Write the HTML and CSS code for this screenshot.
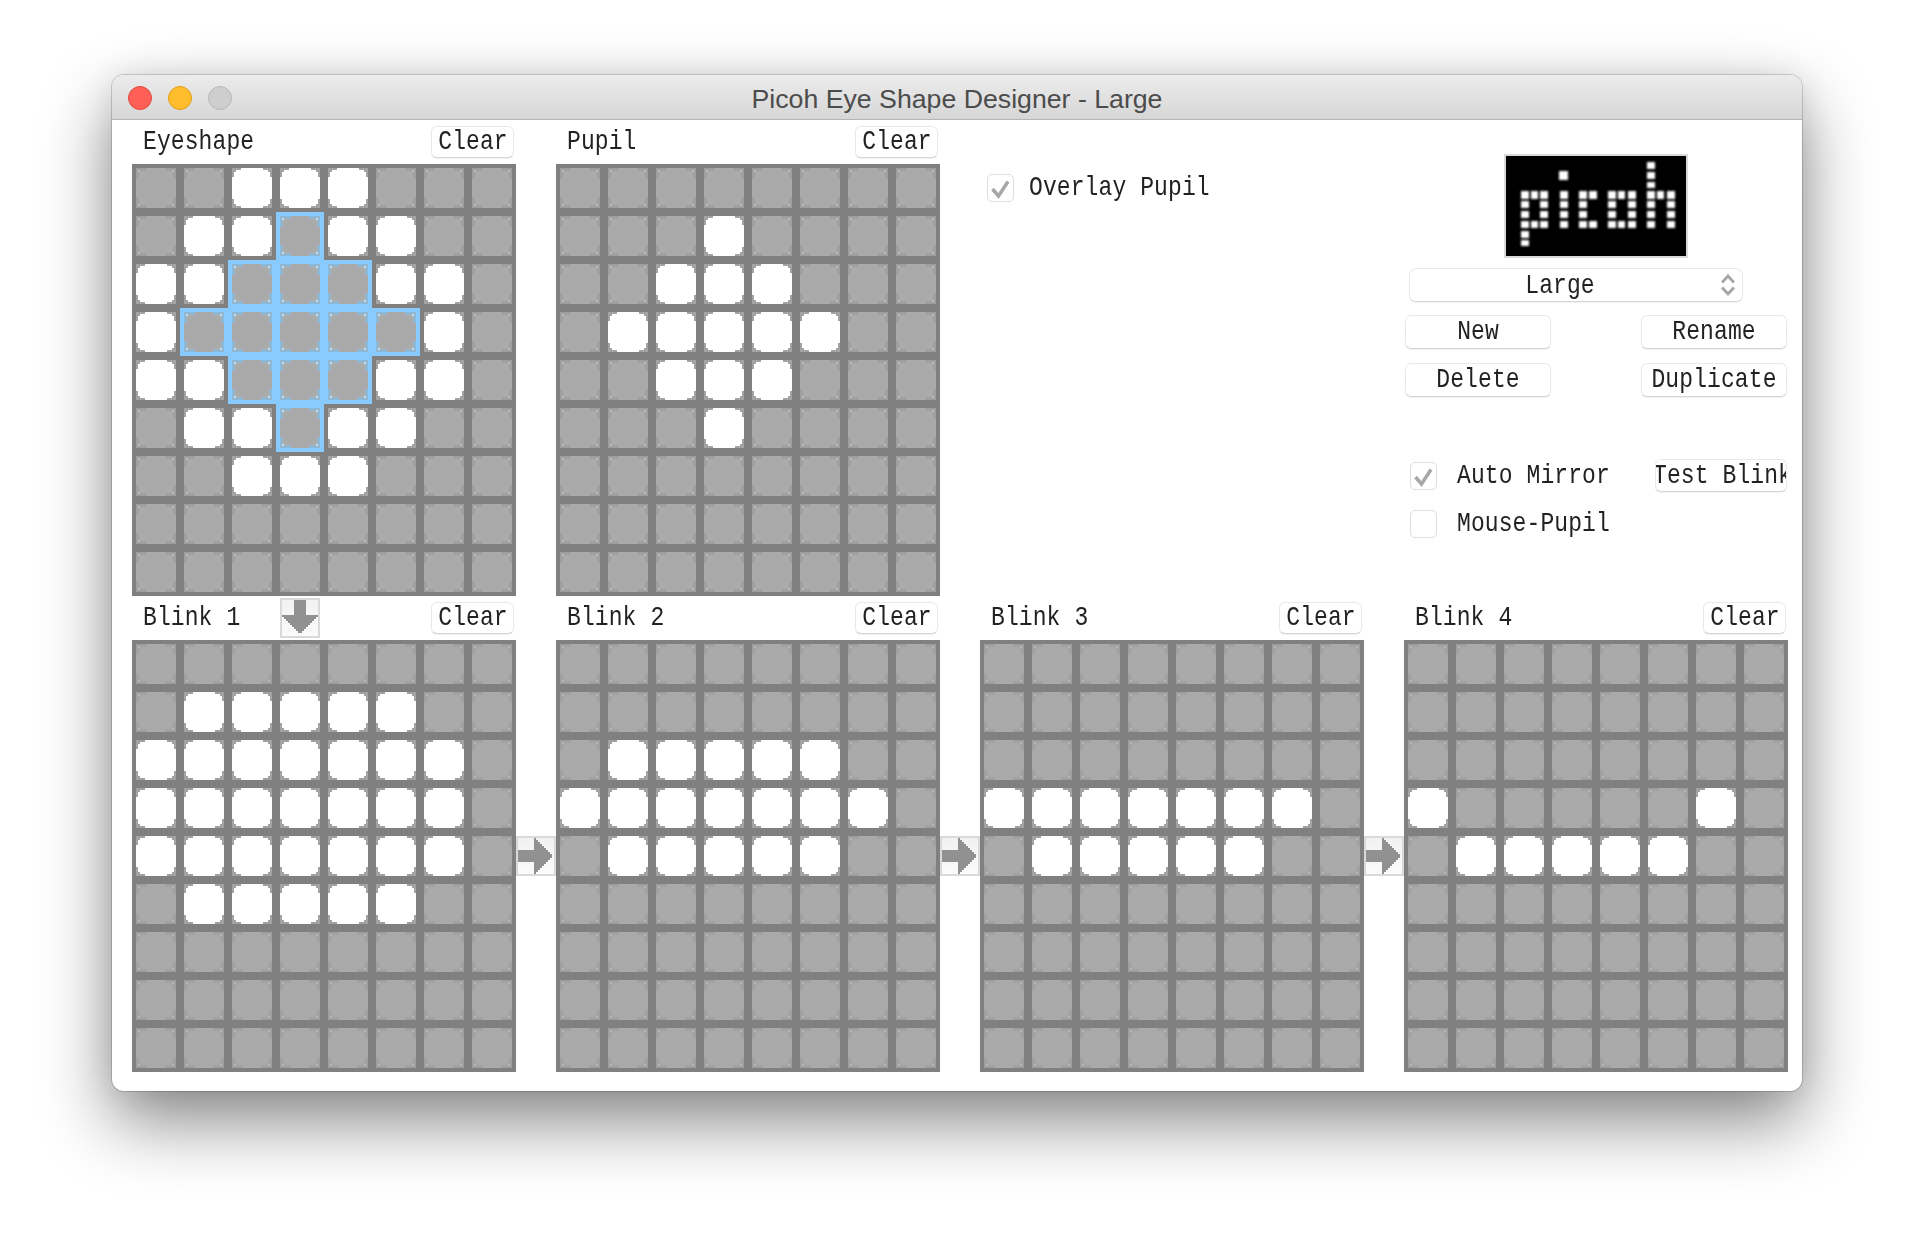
FILE: index.html
```html
<!DOCTYPE html>
<html lang="en">
<head>
<meta charset="utf-8">
<title>Picoh Eye Shape Designer - Large</title>
<link rel="stylesheet" href="styles.css">
</head>
<body>
<div class="window">
  <header class="titlebar">
    <div class="lights"><span class="light red"></span><span class="light yellow"></span><span class="light off"></span></div>
    <div class="title">Picoh Eye Shape Designer - Large</div>
  </header>
  <main class="content">

    <section class="panel">
      <div class="head"><span class="label">Eyeshape</span><button class="btn clear"><span class="t">Clear</span></button></div>
      <div class="grid">
        <i></i><i></i><i class="w"></i><i class="w"></i><i class="w"></i><i></i><i></i><i></i>
        <i></i><i class="w"></i><i class="w"></i><i class="h"></i><i class="w"></i><i class="w"></i><i></i><i></i>
        <i class="w"></i><i class="w"></i><i class="h"></i><i class="h"></i><i class="h"></i><i class="w"></i><i class="w"></i><i></i>
        <i class="w"></i><i class="h"></i><i class="h"></i><i class="h"></i><i class="h"></i><i class="h"></i><i class="w"></i><i></i>
        <i class="w"></i><i class="w"></i><i class="h"></i><i class="h"></i><i class="h"></i><i class="w"></i><i class="w"></i><i></i>
        <i></i><i class="w"></i><i class="w"></i><i class="h"></i><i class="w"></i><i class="w"></i><i></i><i></i>
        <i></i><i></i><i class="w"></i><i class="w"></i><i class="w"></i><i></i><i></i><i></i>
        <i></i><i></i><i></i><i></i><i></i><i></i><i></i><i></i>
        <i></i><i></i><i></i><i></i><i></i><i></i><i></i><i></i>
      </div>
    </section>

    <section class="panel">
      <div class="head"><span class="label">Pupil</span><button class="btn clear"><span class="t">Clear</span></button></div>
      <div class="grid">
        <i></i><i></i><i></i><i></i><i></i><i></i><i></i><i></i>
        <i></i><i></i><i></i><i class="w"></i><i></i><i></i><i></i><i></i>
        <i></i><i></i><i class="w"></i><i class="w"></i><i class="w"></i><i></i><i></i><i></i>
        <i></i><i class="w"></i><i class="w"></i><i class="w"></i><i class="w"></i><i class="w"></i><i></i><i></i>
        <i></i><i></i><i class="w"></i><i class="w"></i><i class="w"></i><i></i><i></i><i></i>
        <i></i><i></i><i></i><i class="w"></i><i></i><i></i><i></i><i></i>
        <i></i><i></i><i></i><i></i><i></i><i></i><i></i><i></i>
        <i></i><i></i><i></i><i></i><i></i><i></i><i></i><i></i>
        <i></i><i></i><i></i><i></i><i></i><i></i><i></i><i></i>
      </div>
    </section>

    <section class="overlay-col">
      <label class="check-row">
        <span class="check"><svg viewBox="0 0 25 26" class="tick"><path d="M4.500 14l6 7L20 6.500"/></svg></span>
        <span class="label">Overlay Pupil</span>
      </label>
    </section>

    <section class="controls">
      <div class="logo">
        <svg class="logo-art" viewBox="0 0 180 100" width="180" height="100">
          <g fill="#fff">
            <rect x="141" y="6" width="8" height="7"/>
            <rect x="53" y="15" width="9" height="9"/><rect x="141" y="16" width="8" height="7"/>
            <rect x="141" y="26" width="8" height="6"/>
            <rect x="15" y="35" width="8" height="8"/><rect x="25" y="35" width="7" height="8"/><rect x="34" y="35" width="8" height="8"/><rect x="54" y="35" width="8" height="8"/><rect x="73" y="35" width="8" height="8"/><rect x="83" y="35" width="8" height="8"/><rect x="102" y="35" width="8" height="8"/><rect x="112" y="35" width="7" height="8"/><rect x="122" y="35" width="8" height="8"/><rect x="141" y="35" width="8" height="8"/><rect x="151" y="35" width="7" height="8"/><rect x="161" y="35" width="8" height="8"/>
            <rect x="15" y="45" width="8" height="7"/><rect x="34" y="45" width="8" height="7"/><rect x="54" y="45" width="8" height="7"/><rect x="73" y="45" width="8" height="7"/><rect x="102" y="45" width="8" height="7"/><rect x="122" y="45" width="8" height="7"/><rect x="141" y="45" width="8" height="7"/><rect x="161" y="45" width="8" height="7"/>
            <rect x="15" y="55" width="8" height="7"/><rect x="34" y="55" width="8" height="7"/><rect x="54" y="55" width="8" height="7"/><rect x="73" y="55" width="8" height="7"/><rect x="102" y="55" width="8" height="7"/><rect x="122" y="55" width="8" height="7"/><rect x="141" y="55" width="8" height="7"/><rect x="161" y="55" width="8" height="7"/>
            <rect x="15" y="65" width="8" height="7"/><rect x="25" y="65" width="7" height="7"/><rect x="34" y="65" width="8" height="7"/><rect x="54" y="65" width="8" height="7"/><rect x="73" y="65" width="8" height="7"/><rect x="83" y="65" width="8" height="7"/><rect x="102" y="65" width="8" height="7"/><rect x="112" y="65" width="7" height="7"/><rect x="122" y="65" width="8" height="7"/><rect x="141" y="65" width="8" height="7"/><rect x="161" y="65" width="8" height="7"/>
            <rect x="15" y="75" width="8" height="7"/>
            <rect x="15" y="84" width="8" height="6"/>
          </g>
        </svg>
      </div>
      <div class="select">
        <span class="t">Large</span>
        <svg class="chevrons" viewBox="0 0 14 24" width="14" height="24"><path d="M1 9.500l6-6.500 6 6.500M1 14.500l6 6.500 6-6.500"/></svg>
      </div>
      <div class="btn-row first"><button class="btn wide"><span class="t">New</span></button><button class="btn wide"><span class="t">Rename</span></button></div>
      <div class="btn-row"><button class="btn wide"><span class="t">Delete</span></button><button class="btn wide"><span class="t">Duplicate</span></button></div>
      <div class="option-row">
        <label class="check-row spaced">
          <span class="check"><svg viewBox="0 0 25 26" class="tick"><path d="M4.500 14l6 7L20 6.500"/></svg></span>
          <span class="label">Auto Mirror</span>
        </label>
        <button class="btn test"><span class="t">Test Blink</span></button>
      </div>
      <label class="check-row spaced mouse">
        <span class="check"></span>
        <span class="label">Mouse-Pupil</span>
      </label>
    </section>

    <section class="panel">
      <div class="head">
        <span class="label">Blink 1</span><button class="btn clear"><span class="t">Clear</span></button>
        <span class="arrow-btn arrow-down"><svg viewBox="0 0 36 36" width="36" height="36" shape-rendering="crispEdges"><path d="M12 0h12v15h12v2h-2v2h-2v2h-2v2h-2v2h-2v2h-2v2h-2v2h-2v2h-4v-2h-2v-2h-2v-2h-2v-2h-2v-2h-2v-2h-2v-2h-2v-2H0v-2h12z"/></svg></span>
      </div>
      <div class="grid">
        <i></i><i></i><i></i><i></i><i></i><i></i><i></i><i></i>
        <i></i><i class="w"></i><i class="w"></i><i class="w"></i><i class="w"></i><i class="w"></i><i></i><i></i>
        <i class="w"></i><i class="w"></i><i class="w"></i><i class="w"></i><i class="w"></i><i class="w"></i><i class="w"></i><i></i>
        <i class="w"></i><i class="w"></i><i class="w"></i><i class="w"></i><i class="w"></i><i class="w"></i><i class="w"></i><i></i>
        <i class="w"></i><i class="w"></i><i class="w"></i><i class="w"></i><i class="w"></i><i class="w"></i><i class="w"></i><i></i>
        <i></i><i class="w"></i><i class="w"></i><i class="w"></i><i class="w"></i><i class="w"></i><i></i><i></i>
        <i></i><i></i><i></i><i></i><i></i><i></i><i></i><i></i>
        <i></i><i></i><i></i><i></i><i></i><i></i><i></i><i></i>
        <i></i><i></i><i></i><i></i><i></i><i></i><i></i><i></i>
      </div>
      <span class="arrow-btn arrow-right"><svg viewBox="0 0 36 36" width="36" height="36" shape-rendering="crispEdges"><path d="M16 0h2v2h2v2h2v2h2v2h2v2h2v2h2v2h2v2h2v4h-2v2h-2v2h-2v2h-2v2h-2v2h-2v2h-2v2h-2v2h-2V24H0V12h16z"/></svg></span>
    </section>

    <section class="panel">
      <div class="head"><span class="label">Blink 2</span><button class="btn clear"><span class="t">Clear</span></button></div>
      <div class="grid">
        <i></i><i></i><i></i><i></i><i></i><i></i><i></i><i></i>
        <i></i><i></i><i></i><i></i><i></i><i></i><i></i><i></i>
        <i></i><i class="w"></i><i class="w"></i><i class="w"></i><i class="w"></i><i class="w"></i><i></i><i></i>
        <i class="w"></i><i class="w"></i><i class="w"></i><i class="w"></i><i class="w"></i><i class="w"></i><i class="w"></i><i></i>
        <i></i><i class="w"></i><i class="w"></i><i class="w"></i><i class="w"></i><i class="w"></i><i></i><i></i>
        <i></i><i></i><i></i><i></i><i></i><i></i><i></i><i></i>
        <i></i><i></i><i></i><i></i><i></i><i></i><i></i><i></i>
        <i></i><i></i><i></i><i></i><i></i><i></i><i></i><i></i>
        <i></i><i></i><i></i><i></i><i></i><i></i><i></i><i></i>
      </div>
      <span class="arrow-btn arrow-right"><svg viewBox="0 0 36 36" width="36" height="36" shape-rendering="crispEdges"><path d="M16 0h2v2h2v2h2v2h2v2h2v2h2v2h2v2h2v2h2v4h-2v2h-2v2h-2v2h-2v2h-2v2h-2v2h-2v2h-2v2h-2V24H0V12h16z"/></svg></span>
    </section>

    <section class="panel">
      <div class="head"><span class="label">Blink 3</span><button class="btn clear"><span class="t">Clear</span></button></div>
      <div class="grid">
        <i></i><i></i><i></i><i></i><i></i><i></i><i></i><i></i>
        <i></i><i></i><i></i><i></i><i></i><i></i><i></i><i></i>
        <i></i><i></i><i></i><i></i><i></i><i></i><i></i><i></i>
        <i class="w"></i><i class="w"></i><i class="w"></i><i class="w"></i><i class="w"></i><i class="w"></i><i class="w"></i><i></i>
        <i></i><i class="w"></i><i class="w"></i><i class="w"></i><i class="w"></i><i class="w"></i><i></i><i></i>
        <i></i><i></i><i></i><i></i><i></i><i></i><i></i><i></i>
        <i></i><i></i><i></i><i></i><i></i><i></i><i></i><i></i>
        <i></i><i></i><i></i><i></i><i></i><i></i><i></i><i></i>
        <i></i><i></i><i></i><i></i><i></i><i></i><i></i><i></i>
      </div>
      <span class="arrow-btn arrow-right"><svg viewBox="0 0 36 36" width="36" height="36" shape-rendering="crispEdges"><path d="M16 0h2v2h2v2h2v2h2v2h2v2h2v2h2v2h2v2h2v4h-2v2h-2v2h-2v2h-2v2h-2v2h-2v2h-2v2h-2v2h-2V24H0V12h16z"/></svg></span>
    </section>

    <section class="panel">
      <div class="head"><span class="label">Blink 4</span><button class="btn clear"><span class="t">Clear</span></button></div>
      <div class="grid">
        <i></i><i></i><i></i><i></i><i></i><i></i><i></i><i></i>
        <i></i><i></i><i></i><i></i><i></i><i></i><i></i><i></i>
        <i></i><i></i><i></i><i></i><i></i><i></i><i></i><i></i>
        <i class="w"></i><i></i><i></i><i></i><i></i><i></i><i class="w"></i><i></i>
        <i></i><i class="w"></i><i class="w"></i><i class="w"></i><i class="w"></i><i class="w"></i><i></i><i></i>
        <i></i><i></i><i></i><i></i><i></i><i></i><i></i><i></i>
        <i></i><i></i><i></i><i></i><i></i><i></i><i></i><i></i>
        <i></i><i></i><i></i><i></i><i></i><i></i><i></i><i></i>
        <i></i><i></i><i></i><i></i><i></i><i></i><i></i><i></i>
      </div>
    </section>

  </main>
</div>
</body>
</html>
```

FILE: styles.css
```css
* { box-sizing: border-box; }
html, body { margin: 0; height: 100%; background: #fff; overflow: hidden; }
body { padding: 75px 0 0 112px; font-family: "Liberation Mono", monospace; color: #222; }

.window {
  width: 1690px;
  height: 1016px;
  background: #fff;
  border-radius: 12px;
  box-shadow: 0 0 0 1px rgba(0,0,0,.16), 0 30px 70px rgba(0,0,0,.48), 0 0 30px rgba(0,0,0,.08);
}

.titlebar {
  height: 45px;
  padding-top: 2px;
  display: grid;
  grid-template-columns: 1fr auto 1fr;
  align-items: center;
  background: linear-gradient(#ececec, #d6d6d6);
  border-bottom: 1px solid #b4b4b4;
  border-radius: 12px 12px 0 0;
}
.lights { display: flex; gap: 16px; padding-left: 16px; }
.light { width: 24px; height: 24px; border-radius: 50%; border: 1px solid; }
.red { background: #ff5f57; border-color: #e2463f; }
.yellow { background: #ffbd2e; border-color: #e1a116; }
.off { background: #cecece; border-color: #b8b8b8; }
.title { padding-top: 2px; font: 26.7px/1 "Liberation Sans", sans-serif; color: #4c4c4c; }

.content {
  display: grid;
  grid-template-columns: repeat(4, 384px);
  column-gap: 40px;
  padding-left: 20px;
}

.panel { position: relative; }
.head {
  position: relative;
  height: 44px;
  padding: 6px 2px 0 11px;
  display: flex;
  justify-content: space-between;
  align-items: flex-start;
}

.label, .t {
  display: inline-block;
  font-size: 23px;
  letter-spacing: .1px;
  white-space: pre;
  transform: scaleY(1.18);
}
.label { line-height: 28px; }
.head .label { line-height: 32px; }

.btn {
  font: 23px/30px "Liberation Mono", monospace;
  color: #222;
  padding: 0;
  background: #fff;
  border: 1px solid #e9e9e9;
  border-bottom-color: #d6d6d6;
  border-radius: 6px;
  box-shadow: 0 1px 1px rgba(0,0,0,.06);
}
.btn .t { margin-top: -2px; }
.clear { width: 83px; height: 32px; padding-left: 1px; }
.wide { width: 146px; height: 34px; }
.test {
  width: 132px;
  height: 33px;
  overflow: hidden;
  white-space: nowrap;
  display: flex;
  justify-content: flex-start;
}
.btn.test .t { margin: 1px 0 0 -3px; }

.grid {
  display: grid;
  grid-template-columns: repeat(8, 40px);
  grid-auto-rows: 40px;
  gap: 8px;
  padding: 4px;
  background: #808080;
}
.grid i {
  --n: #a0a0a0;
  --d: #b7b7b7;
  --s: linear-gradient(var(--n), var(--n));
  --t: linear-gradient(var(--d), var(--d));
  display: block;
  background-color: #aaa;
  background-repeat: no-repeat;
  background-image:
    var(--t), var(--t), var(--t), var(--t),
    var(--s), var(--s), var(--s), var(--s),
    var(--s), var(--s), var(--s), var(--s);
  background-size:
    2px 2px, 2px 2px, 2px 2px, 2px 2px,
    11px 3px, 11px 3px, 11px 3px, 11px 3px,
    3px 11px, 3px 11px, 3px 11px, 3px 11px;
  background-position:
    2px 2px, 36px 2px, 2px 36px, 36px 36px,
    0 0, 100% 0, 0 100%, 100% 100%,
    0 0, 100% 0, 0 100%, 100% 100%;
}
.grid i.w {
  --n: #a3a3a3;
  --d: #a3a3a3;
  background-color: #fff;
  background-size:
    4px 4px, 4px 4px, 4px 4px, 4px 4px,
    9px 2px, 9px 2px, 9px 2px, 9px 2px,
    2px 9px, 2px 9px, 2px 9px, 2px 9px;
  background-position:
    0 0, 100% 0, 0 100%, 100% 100%,
    0 0, 100% 0, 0 100%, 100% 100%,
    0 0, 100% 0, 0 100%, 100% 100%;
}
.grid i.h { --n: #92b6d0; --d: #bfe4ff; box-shadow: 0 0 0 4px #8acbff; }

.arrow-btn {
  position: absolute;
  width: 40px;
  height: 40px;
  padding: 0;
  display: block;
  border: 2px solid #d9d9d9;
  background: linear-gradient(#f1f1f1, #fbfbfb);
}
.arrow-btn svg { display: block; fill: #919191; }
.arrow-down { left: 148px; top: 2px; }
.arrow-right { left: 384px; top: 240px; }

.overlay-col { padding: 54px 0 0 7px; }
.check-row { display: flex; align-items: flex-start; gap: 15px; }
.check-row.spaced { gap: 20px; }
.check {
  flex: none;
  width: 27px;
  height: 28px;
  border: 1px solid #dedede;
  border-radius: 5px;
  background: #fff;
  box-shadow: inset 0 0 1px rgba(0,0,0,.05);
}
.tick { display: block; fill: none; stroke: #a8a8a8; stroke-width: 3.5; }

.controls { padding-top: 34px; }
.logo {
  width: 184px;
  height: 104px;
  margin-left: 100px;
  background: #000;
  border: 2px solid #d9d9d9;
}
.logo-art { display: block; filter: blur(.8px); }

.select {
  position: relative;
  width: 334px;
  height: 34px;
  margin: 10px 0 0 5px;
  padding: 1px 32px 0 0;
  text-align: center;
  line-height: 32px;
  border: 1px solid #e9e9e9;
  border-bottom-color: #d6d6d6;
  border-radius: 7px;
  box-shadow: 0 1px 1px rgba(0,0,0,.06);
}
.chevrons {
  position: absolute;
  right: 7px;
  top: 4px;
  fill: none;
  stroke: #a5a5a5;
  stroke-width: 2.8;
}

.btn-row {
  display: flex;
  justify-content: space-between;
  padding: 0 1px;
  margin-top: 14px;
}
.btn-row.first { margin-top: 13px; }

.option-row {
  display: flex;
  justify-content: space-between;
  align-items: flex-start;
  margin-top: 62px;
  padding: 0 1px 0 6px;
}
.option-row .check-row { margin-top: 3px; }
.mouse { margin: 18px 0 0 6px; }
```
